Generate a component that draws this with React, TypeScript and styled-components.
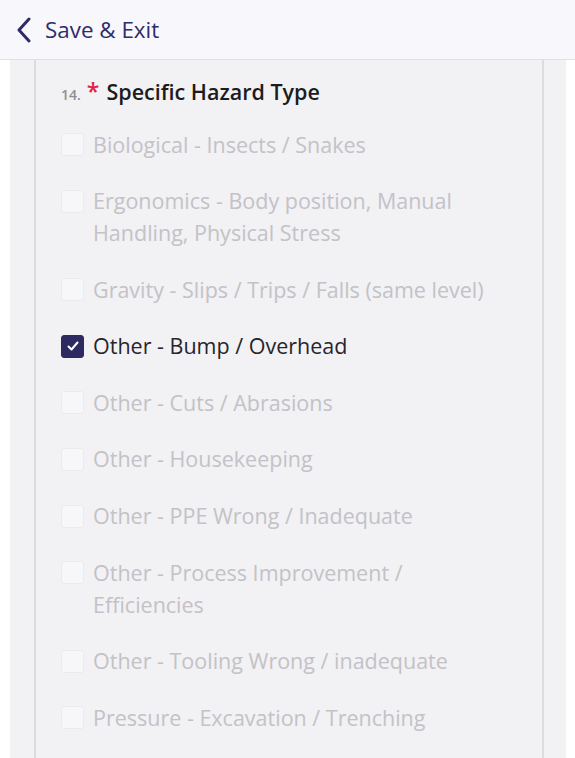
import React from "react";
import styled, { createGlobalStyle } from "styled-components";

const Global = createGlobalStyle`
  html, body { margin: 0; padding: 0; background: #ffffff; }
  body { font-family: "Open Sans", "Noto Sans", sans-serif; -webkit-font-smoothing: antialiased; }
  * { box-sizing: border-box; }
`;

const Header = styled.header`
  height: 60px;
  background: #f8f7fc;
  border-bottom: 1px solid #dfdee4;
  display: flex;
  align-items: center;
  padding-left: 15px;
  gap: 12px;
  color: #2e2b69;
`;

const HeaderTitle = styled.span`
  font-size: 22.4px;
  line-height: 30px;
  color: #2e2b69;
  font-family: "Open Sans", sans-serif;
`;

const Page = styled.div`
  display: flex;
  padding: 0 9px 0 10px;
  min-height: 698px;
`;

const Gutter = styled.div`
  flex: 1;
  display: flex;
  background: #f2f1f4;
  padding: 0 22px 0 24px;
`;

const Panel = styled.section`
  flex: 1;
  border-left: 2px solid #dcdbe0;
  border-right: 2px solid #dcdbe0;
  padding: 15px 28px 0 25px;
  display: flex;
  flex-direction: column;
`;

const Title = styled.h2`
  margin: 0 0 17.5px 0;
  display: flex;
  align-items: baseline;
  font-size: 21.5px;
  line-height: 32px;
  font-weight: 600;
  color: #1c1b20;
`;

const Num = styled.span`
  font-size: 14px;
  color: #8f8e94;
  font-weight: 600;
  margin-right: 6px;
`;

const Star = styled.span`
  color: #e5213f;
  font-size: 23px;
  font-weight: 600;
  margin-right: 7px;
`;

const List = styled.div`
  display: flex;
  flex-direction: column;
  gap: 24.6px;
`;

const Row = styled.label<{ $checked: boolean }>`
  display: flex;
  align-items: flex-start;
  gap: 9px;
  font-size: 21.5px;
  line-height: 32px;
  color: ${(p) => (p.$checked ? "#26252b" : "#c3c2c7")};
`;

const Box = styled.span<{ $checked: boolean }>`
  flex: none;
  width: 23px;
  height: 23px;
  margin-top: 4.5px;
  border-radius: 3px;
  display: flex;
  align-items: center;
  justify-content: center;
  background: ${(p) => (p.$checked ? "#2d2a62" : "#f7f6f9")};
  border: 1px solid ${(p) => (p.$checked ? "#2d2a62" : "#ebeaee")};
`;

const Text = styled.span`
  flex: 1;
`;

const items: { label: string; checked?: boolean }[] = [
  { label: "Biological - Insects / Snakes" },
  { label: "Ergonomics - Body position, Manual Handling, Physical Stress" },
  { label: "Gravity - Slips / Trips / Falls (same level)" },
  { label: "Other - Bump / Overhead", checked: true },
  { label: "Other - Cuts / Abrasions" },
  { label: "Other - Housekeeping" },
  { label: "Other - PPE Wrong / Inadequate" },
  { label: "Other - Process Improvement / Efficiencies" },
  { label: "Other - Tooling Wrong / inadequate" },
  { label: "Pressure - Excavation / Trenching" },
];

export default function App() {
  return (
    <>
      <Global />
      <Header>
        <svg width="18" height="26" viewBox="0 0 18 26" fill="none">
          <path d="M14 2 L4 13 L14 24" stroke="#2e2b69" strokeWidth="3" strokeLinecap="round" strokeLinejoin="round" />
        </svg>
        <HeaderTitle>Save &amp; Exit</HeaderTitle>
      </Header>
      <Page>
        <Gutter>
          <Panel>
            <Title>
              <Num>14.</Num>
              <Star>*</Star>
              Specific Hazard Type
            </Title>
            <List>
              {items.map((it) => (
                <Row key={it.label} $checked={!!it.checked}>
                  <Box $checked={!!it.checked}>
                    {it.checked && (
                      <svg width="14" height="14" viewBox="0 0 14 14" fill="none">
                        <path d="M2.5 7.5 L5.5 10.5 L11.5 3.5" stroke="#ffffff" strokeWidth="2" strokeLinecap="round" strokeLinejoin="round" />
                      </svg>
                    )}
                  </Box>
                  <Text>{it.label}</Text>
                </Row>
              ))}
            </List>
          </Panel>
        </Gutter>
      </Page>
    </>
  );
}
